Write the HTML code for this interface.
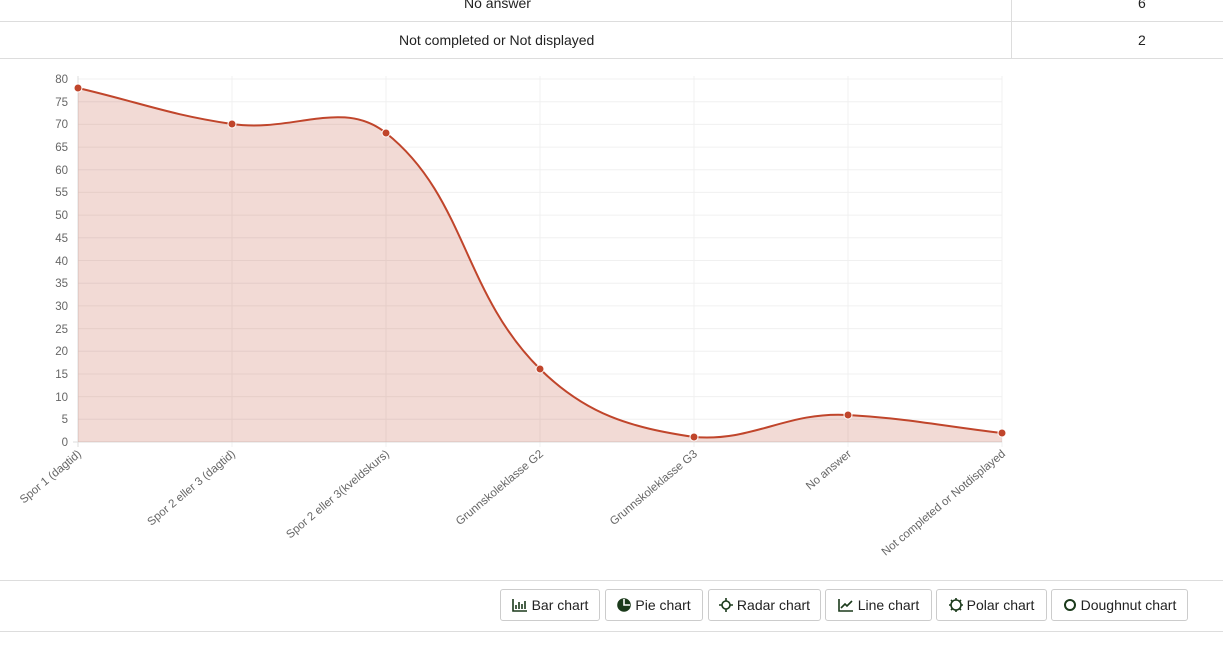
<!DOCTYPE html>
<html><head><style>
body{margin:0;width:1223px;height:648px;overflow:hidden;background:#fff;font-family:"Liberation Sans",sans-serif;position:relative}
.t{position:absolute;font-size:14px;color:#222}
.hl{position:absolute;left:0;width:1223px;height:1px;background:#ddd}
.btn{position:absolute;top:589px;height:32px;border:1px solid #ccc;border-radius:3px;box-sizing:border-box;font-size:14px;color:#222;display:flex;align-items:center;justify-content:center;gap:4px;background:#fff}
.btn svg{fill:none;stroke:#1b3a1b;stroke-width:1.6}
</style></head><body>
<div class="t" style="left:464px;top:-5px">No answer</div>
<div class="t" style="left:1138px;top:-5px">6</div>
<div class="hl" style="top:21px"></div>
<div class="t" style="left:399px;top:32px">Not completed or Not displayed</div>
<div class="t" style="left:1138px;top:32px">2</div>
<div class="hl" style="top:58px"></div>
<div style="position:absolute;left:1011px;top:0;width:1px;height:58px;background:#ddd"></div>
<svg style="position:absolute;left:0;top:0" width="1223" height="580">
<g stroke="#f0f0f0" stroke-width="1">
<line x1="78" y1="79" x2="1002" y2="79"/><line x1="78" y1="101.7" x2="1002" y2="101.7"/><line x1="78" y1="124.4" x2="1002" y2="124.4"/><line x1="78" y1="147.1" x2="1002" y2="147.1"/><line x1="78" y1="169.8" x2="1002" y2="169.8"/><line x1="78" y1="192.4" x2="1002" y2="192.4"/><line x1="78" y1="215.1" x2="1002" y2="215.1"/><line x1="78" y1="237.8" x2="1002" y2="237.8"/><line x1="78" y1="260.5" x2="1002" y2="260.5"/><line x1="78" y1="283.2" x2="1002" y2="283.2"/><line x1="78" y1="305.9" x2="1002" y2="305.9"/><line x1="78" y1="328.6" x2="1002" y2="328.6"/><line x1="78" y1="351.3" x2="1002" y2="351.3"/><line x1="78" y1="374" x2="1002" y2="374"/><line x1="78" y1="396.6" x2="1002" y2="396.6"/><line x1="78" y1="419.3" x2="1002" y2="419.3"/>
<line x1="232" y1="76" x2="232" y2="447"/><line x1="386" y1="76" x2="386" y2="447"/><line x1="540" y1="76" x2="540" y2="447"/><line x1="694" y1="76" x2="694" y2="447"/><line x1="848" y1="76" x2="848" y2="447"/><line x1="1002" y1="76" x2="1002" y2="447"/>
</g>
<line x1="73" y1="442" x2="1002" y2="442" stroke="#ddd"/>
<line x1="78" y1="76" x2="78" y2="447" stroke="#ddd"/>
<path d="M78,88 C139.6,102.4 169.8,114.9 232,124 C293,132.9 342.4,98.3 386,133 C465.6,196.3 462.9,292.9 540,369 C586.1,414.5 630,427.4 694,437 C753.2,442 786.3,411.4 848,415 C909.5,418.6 940.4,425.8 1002,433 L1002,442 L78,442Z" fill="rgba(190,70,45,0.2)"/>
<path d="M78,88 C139.6,102.4 169.8,114.9 232,124 C293,132.9 342.4,98.3 386,133 C465.6,196.3 462.9,292.9 540,369 C586.1,414.5 630,427.4 694,437 C753.2,442 786.3,411.4 848,415 C909.5,418.6 940.4,425.8 1002,433" fill="none" stroke="#c0452b" stroke-width="2"/>
<g fill="#c0452b" stroke="#fff" stroke-width="1">
<circle cx="78" cy="88" r="4"/><circle cx="232" cy="124" r="4"/><circle cx="386" cy="133" r="4"/><circle cx="540" cy="369" r="4"/><circle cx="694" cy="437" r="4"/><circle cx="848" cy="415" r="4"/><circle cx="1002" cy="433" r="4"/>
</g>
<g font-size="11.5" fill="#666" text-anchor="end" font-family="Liberation Sans,sans-serif">
<text x="68" y="83">80</text><text x="68" y="106">75</text><text x="68" y="128">70</text><text x="68" y="151">65</text><text x="68" y="174">60</text><text x="68" y="196">55</text><text x="68" y="219">50</text><text x="68" y="242">45</text><text x="68" y="265">40</text><text x="68" y="287">35</text><text x="68" y="310">30</text><text x="68" y="333">25</text><text x="68" y="355">20</text><text x="68" y="378">15</text><text x="68" y="401">10</text><text x="68" y="423">5</text><text x="68" y="446">0</text>
<text transform="translate(82,455) rotate(-40)">Spor 1 (dagtid)</text>
<text transform="translate(236,455) rotate(-40)">Spor 2 eller 3 (dagtid)</text>
<text transform="translate(390,455) rotate(-40)">Spor 2 eller 3(kveldskurs)</text>
<text transform="translate(544,455) rotate(-40)">Grunnskoleklasse G2</text>
<text transform="translate(698,455) rotate(-40)">Grunnskoleklasse G3</text>
<text transform="translate(852,455) rotate(-40)">No answer</text>
<text transform="translate(1006,455) rotate(-40)">Not completed or Notdisplayed</text>
</g>
</svg>
<div class="hl" style="top:580px"></div>
<div class="btn" style="left:500px;width:100px"><svg width="16" height="14"><path d="M1,1V13H15M4,11V7M7,11V4M10,11V6M13,11V3"/></svg>Bar chart</div>
<div class="btn" style="left:605px;width:98px"><svg width="14" height="14"><circle cx="7" cy="7" r="6" fill="#1b3a1b"/><path d="M7,1V7H13" stroke="#fff"/></svg>Pie chart</div>
<div class="btn" style="left:708px;width:113px"><svg width="14" height="14"><circle cx="7" cy="7" r="4"/><path d="M7,0V3M7,11V14M0,7H3M11,7H14"/></svg>Radar chart</div>
<div class="btn" style="left:825px;width:107px"><svg width="16" height="14"><path d="M1,1V13H15M3,10L7,6L9,8L14,3"/></svg>Line chart</div>
<div class="btn" style="left:936px;width:111px"><svg width="14" height="14"><circle cx="7" cy="7" r="5"/><path d="M7,0V2M7,12V14M0,7H2M12,7H14M2,2L3.5,3.5M10.5,10.5L12,12M12,2L10.5,3.5M2,12L3.5,10.5"/></svg>Polar chart</div>
<div class="btn" style="left:1051px;width:137px"><svg width="14" height="14"><circle cx="7" cy="7" r="5" stroke-width="2"/></svg>Doughnut chart</div>
<div class="hl" style="top:631px"></div>
</body></html>
